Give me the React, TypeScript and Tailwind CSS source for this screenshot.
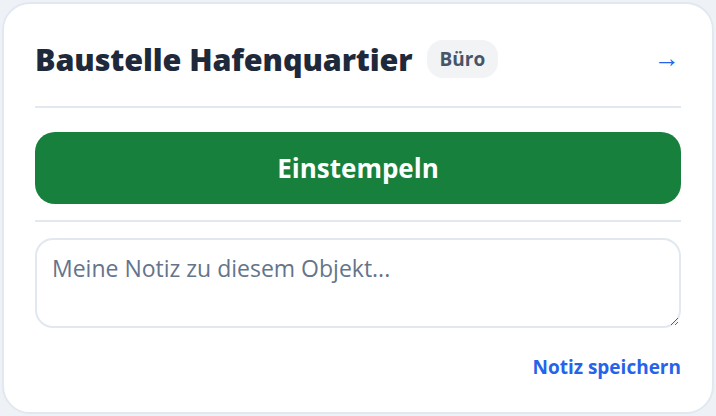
export default function App() {
  return (
    <div className="min-h-screen bg-[#eef2f7] p-[2px]" style={{ fontFamily: '"Open Sans", "Noto Sans", sans-serif' }}>
      <div className="h-[412px] rounded-[28px] border-2 border-[#e2e8f0] bg-white px-[31px] pt-[36px]">
        {/* Header */}
        <div className="flex h-[38px] items-center">
          <h2 className="text-[30.5px] font-extrabold leading-none tracking-[-0.1px] text-[#1e293b]">Baustelle Hafenquartier</h2>
          <span className="ml-[14px] flex h-[38px] items-center rounded-[16px] bg-[#f1f3f5] px-[13px] text-[19px] font-bold text-[#475569]">
            Büro
          </span>
          <button className="ml-auto mr-[1px] -translate-y-[2px] text-[26px] leading-none text-[#2563eb]">→</button>
        </div>

        <div className="mt-[28px] h-[2px] bg-[#e2e8f0]" />

        <button className="mt-[24px] flex h-[72px] w-full items-center justify-center rounded-[20px] bg-[#17803d] text-[26px] font-bold text-white">
          Einstempeln
        </button>

        <div className="mt-[16px] h-[2px] bg-[#e2e8f0]" />

        <textarea
          className="mt-[16px] block h-[90px] w-full rounded-[18px] border-2 border-[#e2e8f0] px-[15px] py-[14px] text-[23px] leading-tight text-[#1e293b] outline-none placeholder:text-[#64748b]"
          placeholder="Meine Notiz zu diesem Objekt..."
        />

        <div className="mt-[30px] flex justify-end">
          <button className="text-[19px] font-bold leading-none text-[#2563eb]">Notiz speichern</button>
        </div>
      </div>
    </div>
  );
}
